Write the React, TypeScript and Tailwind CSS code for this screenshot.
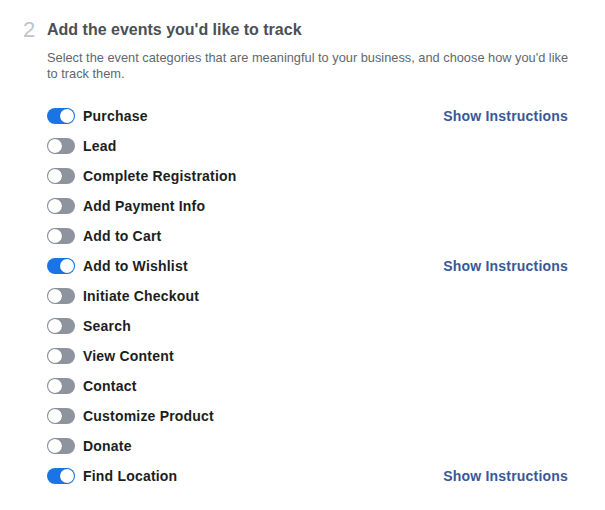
import React, { useState } from 'react';

const events = [
  { label: 'Purchase', on: true },
  { label: 'Lead', on: false },
  { label: 'Complete Registration', on: false },
  { label: 'Add Payment Info', on: false },
  { label: 'Add to Cart', on: false },
  { label: 'Add to Wishlist', on: true },
  { label: 'Initiate Checkout', on: false },
  { label: 'Search', on: false },
  { label: 'View Content', on: false },
  { label: 'Contact', on: false },
  { label: 'Customize Product', on: false },
  { label: 'Donate', on: false },
  { label: 'Find Location', on: true },
];

function Toggle({ on, onClick }: { on: boolean; onClick: () => void }) {
  return (
    <button
      onClick={onClick}
      className={
        'relative w-[28px] h-[16px] rounded-full shrink-0 transition-colors ' +
        (on ? 'bg-[#1b74e4]' : 'bg-[#8d949e]')
      }
    >
      <span
        className={
          'absolute top-[1px] w-[14px] h-[14px] rounded-full bg-white shadow-[0_0_1px_rgba(0,0,0,0.4)] transition-all ' +
          (on ? 'left-[13px]' : 'left-[1px]')
        }
      />
    </button>
  );
}

export default function App() {
  const [state, setState] = useState(events.map((e) => e.on));

  return (
    <div className="w-[605px] h-[510px] bg-white font-['Helvetica_Neue','Liberation_Sans',Arial,sans-serif] pt-[16px] pl-[23px] pr-[34px]">
      <div className="flex items-start">
        <div className="w-[24px] text-[22px] leading-[28px] text-[#bec3c9]">2</div>
        <div className="flex-1">
          <h2 className="text-[16px] leading-[28px] font-bold text-[#4b4f56]">
            Add the events you'd like to track
          </h2>
          <p className="mt-[6px] max-w-[526px] text-[12.8px] leading-[16px] text-[#606770]">
            Select the event categories that are meaningful to your business, and choose how you'd like to track them.
          </p>
          <div className="mt-[19px] flex flex-col">
            {events.map((e, i) => (
              <div key={e.label} className="h-[30px] flex items-center">
                <Toggle
                  on={state[i]}
                  onClick={() => setState((s) => s.map((v, j) => (j === i ? !v : v)))}
                />
                <span className="ml-[8px] text-[14px] tracking-[0.2px] font-bold text-[#1c1e21]">{e.label}</span>
                {state[i] && (
                  <a href="#" className="ml-auto mr-[3px] text-[14px] tracking-[0.2px] font-bold text-[#385898]">
                    Show Instructions
                  </a>
                )}
              </div>
            ))}
          </div>
        </div>
      </div>
    </div>
  );
}
